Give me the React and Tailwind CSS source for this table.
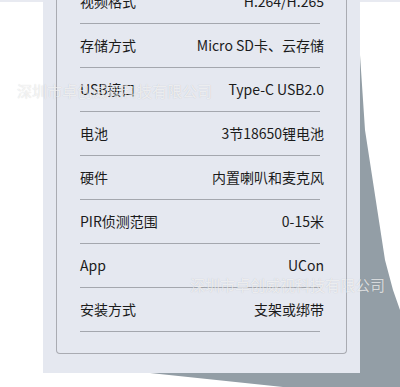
import React from "react";

const specs = [
  ["视频格式", "H.264/H.265"],
  ["存储方式", "Micro SD卡、云存储"],
  ["USB接口", "Type-C USB2.0"],
  ["电池", "3节18650锂电池"],
  ["硬件", "内置喇叭和麦克风"],
  ["PIR侦测范围", "0-15米"],
  ["App", "UCon"],
  ["安装方式", "支架或绑带"],
];

const font = { fontFamily: '"Noto Sans CJK SC", "Noto Sans", sans-serif' };

export default function App() {
  return (
    <div className="relative w-[400px] h-[387px] overflow-hidden bg-white" style={font}>
      {/* strip at the very top */}
      <div className="absolute inset-x-0 top-0 h-[2px] bg-[#e8eaf1]" />

      {/* page curl shadow */}
      <svg className="absolute left-0 top-0" width="400" height="387" viewBox="0 0 400 387">
        <path
          d="M360 55 L365 130 L385 260 L393 290 L400 310 L400 387 L283 387 L150 373 L360 373 Z"
          fill="#939ea6"
        />
      </svg>

      {/* card */}
      <div className="relative ml-[43px] mt-[-41px] w-[317px] h-[414px] bg-[#e5e8f0] px-[13px] pb-[19px] flex flex-col">
        <div className="flex-1 flex flex-col justify-end border-x-[1.5px] border-b-[1.5px] border-[#a9abb2] rounded-b-[4px] pl-[23px] pr-[26px] pb-[21px]">
          {specs.map(([label, value]) => (
            <div
              key={label}
              className="h-[44px] flex items-center justify-between border-b border-[#a4a7ae] text-[14px] text-[#1b1b1b]"
            >
              <span>{label}</span>
              <span className="mr-[-4px]">{value}</span>
            </div>
          ))}
        </div>
      </div>

      {/* watermark */}
      <div className="absolute left-[17px] top-[80px] text-[15px] leading-[22px] text-white/70 [text-shadow:0_0_1px_rgba(0,0,0,0.18)] whitespace-nowrap">
        深圳市卓创威视科技有限公司
      </div>
      <div className="absolute left-[190px] top-[274px] text-[15px] leading-[22px] text-white/70 [text-shadow:0_0_1px_rgba(0,0,0,0.18)] whitespace-nowrap">
        深圳市卓创威视科技有限公司
      </div>
    </div>
  );
}
